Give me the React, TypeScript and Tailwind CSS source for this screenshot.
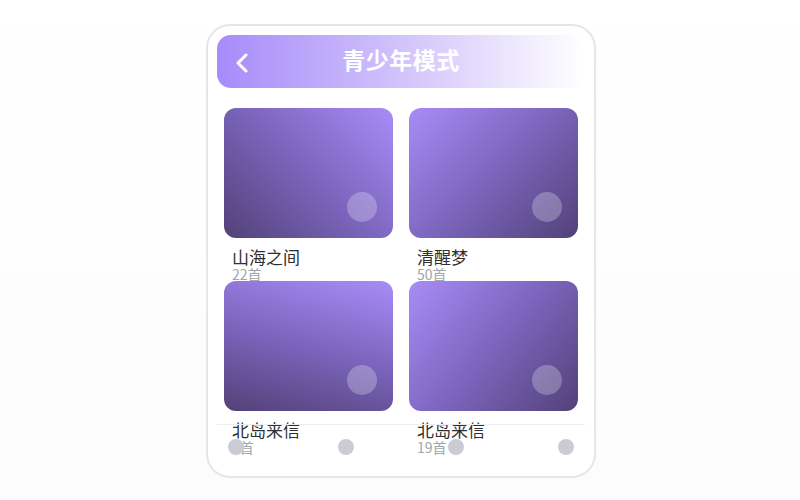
import React from 'react';

// playlists shown in the teen-mode grid
const playlists = [
  { title: '山海之间', count: '22首', grad: 'bg-[linear-gradient(225deg,#a88cf7_0%,#7c65bd_50%,#534178_100%)]' },
  { title: '清醒梦', count: '50首', grad: 'bg-[linear-gradient(135deg,#a88cf7_0%,#7c65bd_50%,#534178_100%)]' },
  { title: '北岛来信', count: '5首', grad: 'bg-[linear-gradient(195deg,#a88cf7_0%,#7c65bd_50%,#534178_100%)]' },
  { title: '北岛来信', count: '19首', grad: 'bg-[linear-gradient(130deg,#a88cf7_0%,#7c65bd_50%,#534178_100%)]' },
];

const BackIcon = () => (
  <svg width="14" height="20" viewBox="0 0 14 20" fill="none">
    <path d="M11 2 L3 10 L11 18" stroke="white" strokeWidth="3" strokeLinecap="round" strokeLinejoin="round" />
  </svg>
);

const PlaylistCard = ({ title, count, grad }: { title: string; count: string; grad: string }) => (
  <div className="h-[173px]">
    <div className={`relative h-[130px] rounded-[12px] ${grad}`}>
      <div className="absolute right-4 bottom-4 w-[30px] h-[30px] rounded-full bg-white/25" />
    </div>
    <div className="pl-2 pt-[9px]">
      <div className="text-[17px] leading-[20px] text-[#2f2f33]">{title}</div>
      <div className="text-[14px] leading-[14px] text-[#a1a5ad]">{count}</div>
    </div>
  </div>
);

export default function App() {
  return (
    <div
      className="w-[800px] h-[500px] bg-[linear-gradient(180deg,#ffffff_0%,#fcfcfd_100%)] pt-6 pl-[2px] flex justify-center"
      style={{ fontFamily: '"Noto Sans CJK SC", "Noto Sans", sans-serif' }}
    >
      <div className="relative w-[390px] h-[454px] border-2 border-[#e6e6ea] rounded-[24px] bg-white overflow-hidden p-[9px]">
        {/* Header */}
        <div className="h-[53px] rounded-[14px] bg-[linear-gradient(90deg,#a78bfa_0%,#cdbdfb_45%,#ffffff_100%)] flex items-center px-[18px]">
          <div className="w-[20px] pt-[3px]">
            <BackIcon />
          </div>
          <div className="flex-1 text-center text-white text-[23px] font-bold tracking-[0.5px] pb-[4px]">青少年模式</div>
          <div className="w-[20px]" />
        </div>

        {/* Grid */}
        <div className="grid grid-cols-2 gap-x-4 px-[7px] pt-5">
          {playlists.map((p, i) => (
            <PlaylistCard key={i} {...p} />
          ))}
        </div>

        {/* Bottom nav */}
        <div className="absolute left-[9px] right-[9px] top-[398px] h-[44px] border-t border-[#eceef1] flex items-center justify-between px-[11px]">
          <div className="w-4 h-4 rounded-full bg-[#c9cdd3]" />
          <div className="w-4 h-4 rounded-full bg-[#c9cdd3]" />
          <div className="w-4 h-4 rounded-full bg-[#c9cdd3]" />
          <div className="w-4 h-4 rounded-full bg-[#c9cdd3]" />
        </div>
      </div>
    </div>
  );
}
